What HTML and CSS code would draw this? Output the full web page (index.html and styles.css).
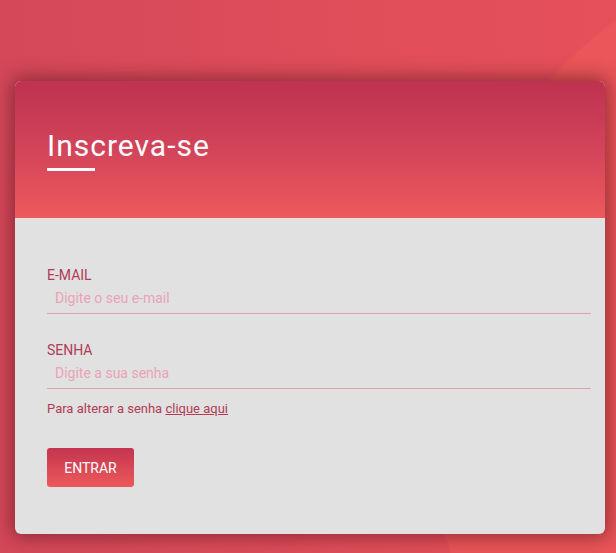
FILE: index.html
```html
<!DOCTYPE html>
<html lang="pt">
<head>
<meta charset="utf-8">
<link rel="stylesheet" href="styles.css">
</head>
<body>
<main class="card">
  <header class="card-header">
    <h1 class="title">Inscreva-se</h1>
    <span class="title-bar"></span>
  </header>
  <form class="card-body">
    <label class="field">
      <span class="label">E-MAIL</span>
      <input class="input" type="email" placeholder="Digite o seu e-mail">
    </label>
    <label class="field">
      <span class="label">SENHA</span>
      <input class="input" type="password" placeholder="Digite a sua senha">
    </label>
    <p class="hint">Para alterar a senha <a href="#" class="hint-link">clique aqui</a></p>
    <button type="button" class="btn">ENTRAR</button>
  </form>
</main>
</body>
</html>
```

FILE: styles.css
```css
* { box-sizing: border-box; }
html, body { margin: 0; height: 100%; }
body {
  background:
    radial-gradient(circle 475px at 900px 400px, #ea5659 473px, rgba(234, 86, 89, 0) 476px),
    linear-gradient(90deg, #d4485a 0%, #e04e5a 60%, #e5505a 100%);
  background-color: #e24f5a;
  font-family: Roboto, "Liberation Sans", Arial, sans-serif;
  overflow: hidden;
  padding: 81px 11px 0 15px;
}
.card {
  width: 590px;
  height: 453px;
  border-radius: 6px;
  overflow: hidden;
  background: #e1e1e1;
  box-shadow: 0 0 18px 4px rgba(90, 20, 30, 0.55);
}
.card-header {
  height: 137px;
  background: linear-gradient(180deg, #bf3250 0%, #d2445a 50%, #ed5a5b 100%);
  padding: 47px 32px 0;
}
.title {
  margin: 0;
  font-weight: 400;
  font-size: 30px;
  line-height: 36px;
  letter-spacing: 1px;
  color: #fff;
}
.title-bar {
  display: block;
  width: 48px;
  height: 3px;
  background: #fff;
  margin-top: 4px;
}
.card-body {
  padding: 49px 14px 0 32px;
}
.field {
  display: block;
}
.field + .field { margin-top: 28px; }
.label {
  display: block;
  font-size: 14px;
  line-height: 16px;
  color: #b13c56;
}
.input {
  display: block;
  width: 100%;
  border: 0;
  border-bottom: 1px solid #e3a0b1;
  border-radius: 0;
  background: transparent;
  font-family: Roboto, "Liberation Sans", Arial, sans-serif;
  font-size: 14px;
  padding: 7px 8px 7px;
  line-height: 16px;
  height: 31px;
  outline: none;
}
.input::placeholder { color: #eaa3b5; opacity: 1; }
.hint {
  margin: 12px 0 0;
  font-size: 13px;
  line-height: 15px;
  color: #b13c56;
}
.hint-link { color: #b13c56; }
.btn {
  display: block;
  margin-top: 32px;
  width: 87px;
  height: 39px;
  border: 0;
  border-radius: 3px;
  background: linear-gradient(180deg, #c3344f 0%, #ed5a5b 100%);
  color: #fff;
  font-family: Roboto, "Liberation Sans", Arial, sans-serif;
  font-size: 14px;
  padding: 0;
}
```
